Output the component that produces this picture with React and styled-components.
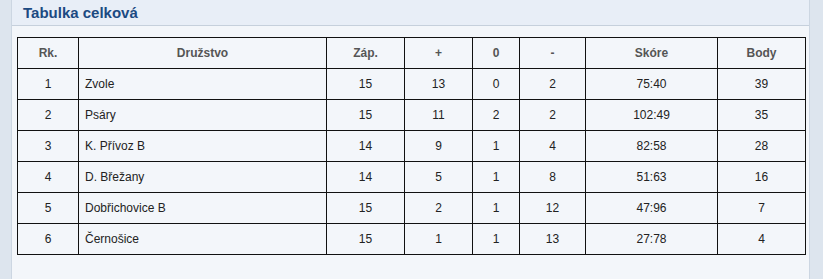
import React from 'react';
import styled, { createGlobalStyle } from 'styled-components';

const rows = [
  { rk: 1, team: 'Zvole', zap: 15, win: 13, draw: 0, loss: 2, score: '75:40', pts: 39 },
  { rk: 2, team: 'Psáry', zap: 15, win: 11, draw: 2, loss: 2, score: '102:49', pts: 35 },
  { rk: 3, team: 'K. Přívoz B', zap: 14, win: 9, draw: 1, loss: 4, score: '82:58', pts: 28 },
  { rk: 4, team: 'D. Břežany', zap: 14, win: 5, draw: 1, loss: 8, score: '51:63', pts: 16 },
  { rk: 5, team: 'Dobřichovice B', zap: 15, win: 2, draw: 1, loss: 12, score: '47:96', pts: 7 },
  { rk: 6, team: 'Černošice', zap: 15, win: 1, draw: 1, loss: 13, score: '27:78', pts: 4 },
];

const widths = [61, 248, 78, 68, 47, 66, 132, 88];

const App = () => {
  return (
    <>
      <GlobalStyle />
      <Page>
        <Panel>
          <PanelHeader>
            <Title>Tabulka celková</Title>
          </PanelHeader>
          <PanelBody>
            <Table>
              <colgroup>
                {widths.map((w, i) => (
                  <col key={i} style={{ width: w }} />
                ))}
              </colgroup>
              <thead>
                <tr>
                  <Th>Rk.</Th>
                  <Th>Družstvo</Th>
                  <Th>Záp.</Th>
                  <Th>+</Th>
                  <Th>0</Th>
                  <Th>-</Th>
                  <Th>Skóre</Th>
                  <Th>Body</Th>
                </tr>
              </thead>
              <tbody>
                {rows.map((r) => (
                  <tr key={r.rk}>
                    <Td>{r.rk}</Td>
                    <Td $left>{r.team}</Td>
                    <Td>{r.zap}</Td>
                    <Td>{r.win}</Td>
                    <Td>{r.draw}</Td>
                    <Td>{r.loss}</Td>
                    <Td>{r.score}</Td>
                    <Td>{r.pts}</Td>
                  </tr>
                ))}
              </tbody>
            </Table>
          </PanelBody>
        </Panel>
      </Page>
    </>
  );
};

export default App;

const GlobalStyle = createGlobalStyle`
  html, body {
    margin: 0;
    padding: 0;
    background: #dde5ee;
    font-family: "Liberation Sans", Arial, sans-serif;
  }
`;

const Page = styled.div`
  width: 823px;
  height: 279px;
  overflow: hidden;
  padding: 0 13px 0 11px;
  box-sizing: border-box;
  background: #dde5ee;
`;

const Panel = styled.div`
  width: 799px;
  height: 300px;
  background: #f3f6fa;
  border-left: 1px solid #ccd6e2;
  border-right: 1px solid #ccd6e2;
  box-sizing: border-box;
`;

const PanelHeader = styled.div`
  height: 25px;
  display: flex;
  align-items: center;
  padding-left: 11px;
  background: #e8eef7;
  border-bottom: 1px solid #c6d0dc;
`;

const Title = styled.h2`
  margin: 0;
  font-size: 15px;
  font-weight: bold;
  color: #1c4a82;
`;

const PanelBody = styled.div`
  padding: 11px 0 0 5px;
`;

const Table = styled.table`
  width: 788px;
  table-layout: fixed;
  border-collapse: collapse;
  font-size: 12px;
`;

const Th = styled.th`
  height: 30px;
  padding: 0;
  border: 1px solid #111;
  color: #555;
  font-weight: bold;
  text-align: center;
`;

const Td = styled.td`
  height: 30px;
  padding: ${({ $left }) => ($left ? '0 0 0 6px' : '0')};
  border: 1px solid #111;
  color: #222;
  text-align: ${({ $left }) => ($left ? 'left' : 'center')};
`;
